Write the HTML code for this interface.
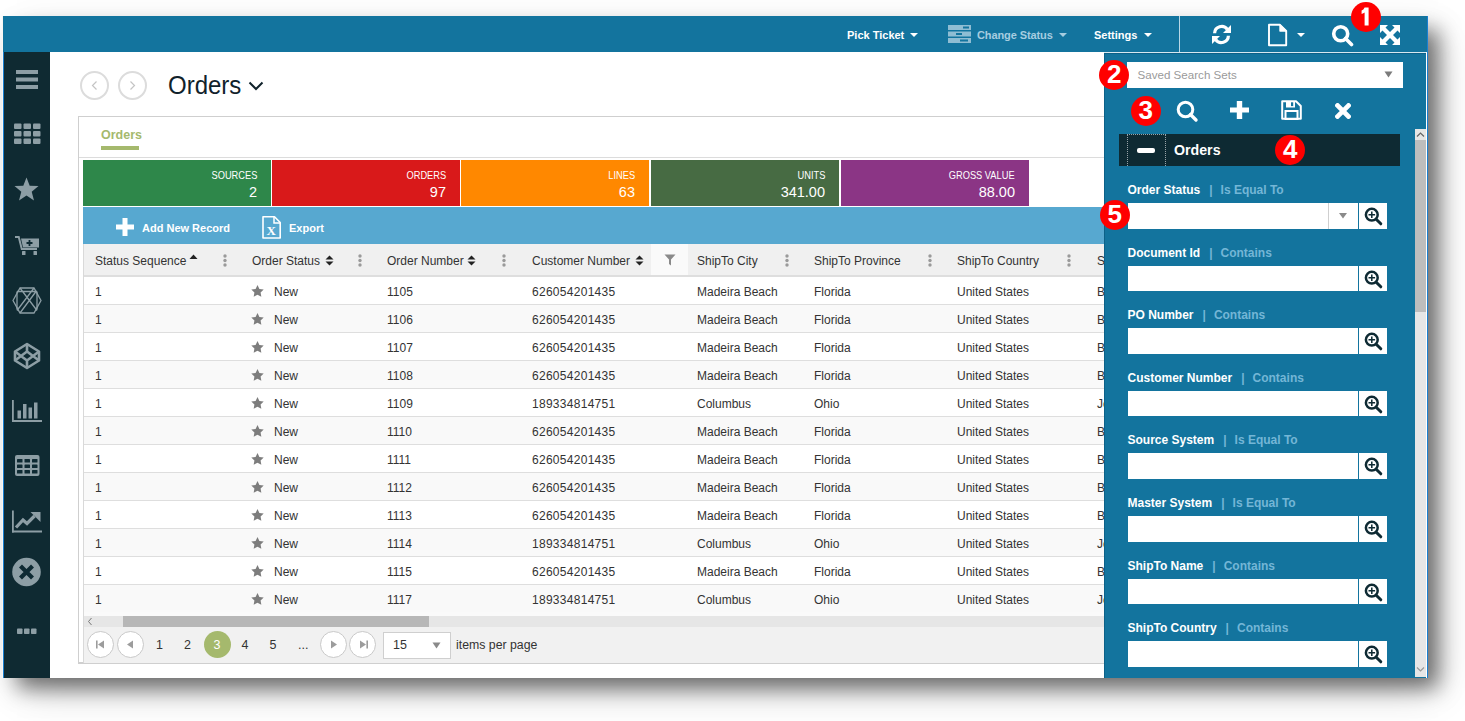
<!DOCTYPE html>
<html><head><meta charset="utf-8">
<style>
*{box-sizing:border-box;margin:0;padding:0}
html,body{width:1465px;height:721px;overflow:hidden;background:#fff;font-family:"Liberation Sans",sans-serif;color:#333}
.a{position:absolute}
#win{left:3px;top:16px;width:1425px;height:662px;background:#fff;box-shadow:12px 12px 20px -2px rgba(0,0,0,.52),14px 16px 40px -6px rgba(0,0,0,.2)}
#top{left:3px;top:16px;width:1425px;height:36px;background:#13749e}
#side{left:3px;top:52px;width:47px;height:626px;background:#0f2a32;border-left:1px solid #1a7fd0}
.tb{color:#fff;font-weight:bold;font-size:11px;top:28px;line-height:14px;white-space:nowrap}
.caret{width:0;height:0;border-left:4px solid transparent;border-right:4px solid transparent;border-top:4px solid #fff}
.ico{fill:#8d9ea5}
.tile{top:160px;width:188px;height:46px;color:#fff;text-align:right;padding-right:14px}
.tl{position:absolute;right:14px;top:8px;font-size:10.8px;line-height:14px;white-space:nowrap;transform:scaleX(.86);transform-origin:100% 50%}
.tv{position:absolute;right:14px;top:23px;font-size:14.5px;line-height:18px;white-space:nowrap}
.tbw{top:221px;color:#fff;font-weight:bold;font-size:11px;line-height:14px;white-space:nowrap}
.th{top:253px;font-size:12px;line-height:16px;color:#333;white-space:nowrap;transform:scaleY(1.07)}
.tr{left:83px;width:1030px;height:28px;border-bottom:1px solid #dedede}
.td{font-size:12px;line-height:16px;color:#333;white-space:nowrap;transform:translateY(1px) scaleY(1.07)}
.num{letter-spacing:0.28px}
.pc{top:631px;width:27px;height:27px;border-radius:50%;border:1px solid #c9c9c9;background:#fff}
.pn{top:637px;font-size:12.5px;line-height:16px;white-space:nowrap}
.fl{left:1127.5px;font-size:12px;font-weight:bold;line-height:16px;color:#fff;white-space:nowrap}
.fc{color:#74b6d6}
.fi{left:1127.5px;width:230px;height:25.5px;background:#fff}
.fb{left:1359px;width:28px;height:25.5px;background:#fff}
.fb svg{display:block}
.bd{width:30px;height:30px;border-radius:50%;background:#f00;color:#fff;font-weight:bold;font-size:26px;line-height:28.5px;text-align:center;letter-spacing:-0.5px}
</style></head><body>
<div id="win" class="a"></div>
<div class="a" style="left:2px;top:16px;width:1px;height:662px;background:#faf6f2"></div>
<div id="top" class="a"></div>
<div id="side" class="a"></div>
<!-- TOP BAR -->
<div class="a tb" style="left:847px">Pick Ticket</div>
<div class="a caret" style="left:910px;top:33px"></div>
<svg class="a" style="left:948px;top:25px" width="23" height="18" viewBox="0 0 23 18">
 <rect x="0" y="0" width="23" height="5" fill="#8fbdd3"/><rect x="0" y="6.5" width="23" height="5" fill="#8fbdd3"/><rect x="0" y="13" width="23" height="5" fill="#8fbdd3"/>
 <rect x="15" y="1.5" width="6" height="2" fill="#13749e"/><rect x="8" y="8" width="6" height="2" fill="#13749e"/><rect x="12" y="14.5" width="8" height="2" fill="#13749e"/>
</svg>
<div class="a tb" style="left:977px;color:#a6cde0;letter-spacing:-0.1px">Change Status</div>
<div class="a caret" style="left:1059px;top:33px;border-top-color:#a6cde0"></div>
<div class="a tb" style="left:1094px">Settings</div>
<div class="a caret" style="left:1144px;top:33px"></div>
<div class="a" style="left:1179px;top:16px;width:1px;height:36px;background:#b9d8e6"></div>
<!-- refresh -->
<svg class="a" style="left:1211px;top:24px" width="21" height="21" viewBox="0 0 21 21">
 <path d="M3.6 9.2 A7 7 0 0 1 16.3 5.4" fill="none" stroke="#fff" stroke-width="3.2"/>
 <path d="M20 1 L20 9 L12 9 Z" fill="#fff"/>
 <path d="M17.4 11.8 A7 7 0 0 1 4.7 15.6" fill="none" stroke="#fff" stroke-width="3.2"/>
 <path d="M1 20 L1 12 L9 12 Z" fill="#fff"/>
</svg>
<!-- file -->
<svg class="a" style="left:1267px;top:23px" width="21" height="24" viewBox="0 0 21 24">
 <path d="M2 1.8 H13 L19.2 8 V22.2 H2 Z" fill="none" stroke="#fff" stroke-width="1.9" stroke-linejoin="round"/>
 <path d="M13 2 V8 H19 Z" fill="#fff" stroke="#fff" stroke-width="1.4" stroke-linejoin="round"/>
</svg>
<div class="a caret" style="left:1297px;top:33px"></div>
<!-- search -->
<svg class="a" style="left:1331px;top:24px" width="23" height="23" viewBox="0 0 23 23">
 <circle cx="9.7" cy="9.7" r="7" fill="none" stroke="#fff" stroke-width="3.6"/>
 <path d="M14.5 14.5 L20.5 20.5" stroke="#fff" stroke-width="3.6" stroke-linecap="round"/>
</svg>
<!-- expand -->
<svg class="a" style="left:1379px;top:24px" width="22" height="22" viewBox="0 0 22 22">
 <path d="M1 1 H9 L6.5 3.5 L11 8 L15.5 3.5 L13 1 H21 V9 L18.5 6.5 L14 11 L18.5 15.5 L21 13 V21 H13 L15.5 18.5 L11 14 L6.5 18.5 L9 21 H1 V13 L3.5 15.5 L8 11 L3.5 6.5 L1 9 Z" fill="#fff"/>
</svg>
<div class="a" style="left:1104px;top:52px;width:324px;height:1px;background:#d8e8f0"></div>
<div class="a" style="left:1426px;top:52px;width:1px;height:626px;background:#fff"></div>
<div class="a" style="left:1427px;top:16px;width:1px;height:662px;background:#1a7fd0"></div>

<!-- SIDEBAR ICONS -->
<svg class="a" style="left:4px;top:52px" width="46" height="626" viewBox="0 0 46 626">
 <g fill="#8d9ea5" stroke="none">
  <!-- hamburger (page y 70..89) -->
  <rect x="12" y="18" width="22" height="4"/><rect x="12" y="25.5" width="22" height="4"/><rect x="12" y="33" width="22" height="4"/>
  <!-- grid y 123..144 -->
  <g transform="translate(10,71.5)">
   <rect x="0" y="0" width="7.5" height="5.5" rx="1"/><rect x="9.5" y="0" width="7.5" height="5.5" rx="1"/><rect x="19" y="0" width="7.5" height="5.5" rx="1"/>
   <rect x="0" y="7.5" width="7.5" height="5.5" rx="1"/><rect x="9.5" y="7.5" width="7.5" height="5.5" rx="1"/><rect x="19" y="7.5" width="7.5" height="5.5" rx="1"/>
   <rect x="0" y="15" width="7.5" height="5.5" rx="1"/><rect x="9.5" y="15" width="7.5" height="5.5" rx="1"/><rect x="19" y="15" width="7.5" height="5.5" rx="1"/>
  </g>
  <!-- star y 177.5..201 -->
  <path transform="translate(10.5,125.5)" d="M12 0 L15.2 8.2 L24 8.6 L17.2 14.2 L19.5 23 L12 18.1 L4.5 23 L6.8 14.2 L0 8.6 L8.8 8.2 Z"/>
  <!-- cart y 236..256 -->
  <g transform="translate(11,183.5)">
   <path d="M0 0.5 H4.5 L7.5 12.5 H22 V14.5 H6 L3 2.5 H0 Z"/>
   <path d="M6 3 H24 V12 H8 Z"/>
   <rect x="7" y="15.5" width="3.5" height="4" rx="0.5"/><rect x="18.5" y="15.5" width="3.5" height="4" rx="0.5"/>
  </g>
  <path transform="translate(11,183.5)" d="M14.5 4.5 V10.5 M11.5 7.5 H17.5" stroke="#0e2a33" stroke-width="1.8"/>
 </g>
 <g fill="none" stroke="#8d9ea5">
  <!-- hex1 y 287.5..313 -->
  <g transform="translate(23,248.5)" stroke-width="1.3">
   <path d="M-14 0 L-7 -12.5 L7 -12.5 L14 0 L7 12.5 L-7 12.5 Z"/>
   <path d="M-7 -12.5 L10 10 M7 -12.5 L-10 10 M-10 -9 L-10 9 M10 -9 L10 9 M-10 -9 L10 -9 M-7 12.5 L9 -9"/>
  </g>
  <!-- hex2 codepen y 343..369 -->
  <g transform="translate(23,304)" stroke-width="2.6" stroke-linejoin="round">
   <path d="M0 -12 L12 -4.5 L12 4.5 L0 12 L-12 4.5 L-12 -4.5 Z"/>
   <path d="M0 -12 V-4.5 M0 12 V4.5 M-12 -4.5 L0 4.5 L12 -4.5 M-12 4.5 L0 -4.5 L12 4.5"/>
  </g>
 </g>
 <g fill="#8d9ea5">
  <!-- bar chart y 400..422 -->
  <g transform="translate(8,348)">
   <rect x="0" y="0" width="1.8" height="22"/><rect x="0" y="20" width="30" height="2"/>
   <rect x="5.5" y="10.5" width="3.5" height="8"/><rect x="11" y="4" width="3.5" height="14.5"/><rect x="16.5" y="7.5" width="3.5" height="11"/><rect x="22" y="2.5" width="3.5" height="16"/>
  </g>
  <!-- table y 455..476 -->
  <g transform="translate(11,403)">
   <rect x="0" y="0" width="24.5" height="21" rx="2"/>
  </g>
  <g transform="translate(11,403)" fill="#0e2a33">
   <rect x="2" y="4" width="5.5" height="3.5" rx="0.6"/><rect x="9.5" y="4" width="5.5" height="3.5" rx="0.6"/><rect x="17" y="4" width="5.5" height="3.5" rx="0.6"/>
   <rect x="2" y="9.5" width="5.5" height="3.5" rx="0.6"/><rect x="9.5" y="9.5" width="5.5" height="3.5" rx="0.6"/><rect x="17" y="9.5" width="5.5" height="3.5" rx="0.6"/>
   <rect x="2" y="15" width="5.5" height="3.5" rx="0.6"/><rect x="9.5" y="15" width="5.5" height="3.5" rx="0.6"/><rect x="17" y="15" width="5.5" height="3.5" rx="0.6"/>
  </g>
  <!-- line chart y 510..533 -->
  <g transform="translate(8,458.5)">
   <rect x="0" y="0" width="1.8" height="22"/><rect x="0" y="20" width="30" height="2"/>
  </g>
  <path transform="translate(8,458.5)" d="M4 17 L11 9.5 L15 13 L22.5 5.5" fill="none" stroke="#8d9ea5" stroke-width="3.2" stroke-linejoin="miter"/>
  <path transform="translate(8,458.5)" d="M18.5 1.5 H28.5 V11.5 Z" fill="#8d9ea5"/>
  <!-- x circle y 558..586 -->
  <circle cx="22.5" cy="520" r="14.3"/>
  <path d="M16.5 514 L28.5 526 M28.5 514 L16.5 526" stroke="#0e2a33" stroke-width="4.2"/>
  <!-- dots y 629..634 -->
  <rect x="13" y="576.5" width="5.5" height="5.5" rx="0.8"/><rect x="20" y="576.5" width="5.5" height="5.5" rx="0.8"/><rect x="27" y="576.5" width="5.5" height="5.5" rx="0.8"/>
 </g>
</svg>

<!--MAIN-->
<!-- MAIN CONTENT -->
<div class="a" style="left:80px;top:71px;width:29px;height:29px;border:2px solid #dcdcdc;border-radius:50%"></div>
<div class="a" style="left:118px;top:71px;width:29px;height:29px;border:2px solid #dcdcdc;border-radius:50%"></div>
<svg class="a" style="left:80px;top:71px" width="67" height="29" viewBox="0 0 67 29">
 <path d="M16.5 10.5 L12.5 14.5 L16.5 18.5" fill="none" stroke="#c4c4c4" stroke-width="1.2"/>
 <path d="M50.5 10.5 L54.5 14.5 L50.5 18.5" fill="none" stroke="#c4c4c4" stroke-width="1.2"/>
</svg>
<div class="a" style="left:168px;top:72px;font-size:24px;line-height:30px;color:#10222b;transform:scaleY(1.08);transform-origin:0 100%">Orders</div>
<svg class="a" style="left:248px;top:80px" width="16" height="12" viewBox="0 0 16 12"><path d="M1.5 2.5 L8 9 L14.5 2.5" fill="none" stroke="#10222b" stroke-width="2"/></svg>
<div class="a" style="left:78px;top:116px;width:1100px;height:548px;border:1px solid #cfcfcf;border-bottom:2px solid #cfcfcf"></div>
<div class="a" style="left:101px;top:127px;font-size:12.5px;font-weight:bold;line-height:16px;color:#a5b96d">Orders</div>
<div class="a" style="left:101px;top:146px;width:38px;height:3.5px;background:#a5b96d"></div>
<div class="a" style="left:79px;top:157px;width:1100px;height:1px;background:#dcdcdc"></div>

<div class="a tile" style="left:83px;background:#2e874a"><div class="tl">SOURCES</div><div class="tv">2</div></div>
<div class="a tile" style="left:272px;background:#d9191a"><div class="tl">ORDERS</div><div class="tv">97</div></div>
<div class="a tile" style="left:461px;background:#ff8800"><div class="tl">LINES</div><div class="tv">63</div></div>
<div class="a tile" style="left:651px;background:#476b43"><div class="tl">UNITS</div><div class="tv">341.00</div></div>
<div class="a tile" style="left:841px;background:#8b3585"><div class="tl">GROSS VALUE</div><div class="tv">88.00</div></div>

<div class="a" style="left:83px;top:207px;width:1030px;height:37px;background:#57a8d0"></div>
<svg class="a" style="left:116px;top:218px" width="18" height="18" viewBox="0 0 18 18"><path d="M6.5 0 H11.5 V6.5 H18 V11.5 H11.5 V18 H6.5 V11.5 H0 V6.5 H6.5 Z" fill="#fff"/></svg>
<div class="a tbw" style="left:142px">Add New Record</div>
<svg class="a" style="left:260px;top:215px" width="23" height="25" viewBox="0 0 23 25">
 <path d="M3 1.8 H14.5 L20.2 7.5 V23 H3 Z" fill="none" stroke="#fff" stroke-width="1.6" stroke-linejoin="round"/>
 <path d="M14 2 V8 H20" fill="none" stroke="#fff" stroke-width="1.5"/>
 <text x="11.3" y="19.8" font-family="Liberation Serif" font-weight="bold" font-size="13" fill="#fff" text-anchor="middle">X</text>
</svg>
<div class="a tbw" style="left:289px">Export</div>
<div class="a" style="left:83px;top:244px;width:1030px;height:33px;background:#f0f0f0;border-bottom:2px solid #dedede"></div>
<div class="a" style="left:651px;top:244px;width:37px;height:31px;background:#fafafa"></div>

<div class="a th" style="left:95px">Status Sequence</div>
<svg class="a" style="left:223px;top:254px" width="4" height="13" viewBox="0 0 4 13"><circle cx="2" cy="2" r="1.7" fill="#9a9a9a"/><circle cx="2" cy="6.5" r="1.7" fill="#9a9a9a"/><circle cx="2" cy="11" r="1.7" fill="#9a9a9a"/></svg>
<div class="a th" style="left:252px">Order Status</div>
<svg class="a" style="left:358px;top:254px" width="4" height="13" viewBox="0 0 4 13"><circle cx="2" cy="2" r="1.7" fill="#9a9a9a"/><circle cx="2" cy="6.5" r="1.7" fill="#9a9a9a"/><circle cx="2" cy="11" r="1.7" fill="#9a9a9a"/></svg>
<div class="a th" style="left:387px">Order Number</div>
<svg class="a" style="left:502px;top:254px" width="4" height="13" viewBox="0 0 4 13"><circle cx="2" cy="2" r="1.7" fill="#9a9a9a"/><circle cx="2" cy="6.5" r="1.7" fill="#9a9a9a"/><circle cx="2" cy="11" r="1.7" fill="#9a9a9a"/></svg>
<div class="a th" style="left:532px">Customer Number</div>
<div class="a th" style="left:697px">ShipTo City</div>
<svg class="a" style="left:785px;top:254px" width="4" height="13" viewBox="0 0 4 13"><circle cx="2" cy="2" r="1.7" fill="#9a9a9a"/><circle cx="2" cy="6.5" r="1.7" fill="#9a9a9a"/><circle cx="2" cy="11" r="1.7" fill="#9a9a9a"/></svg>
<div class="a th" style="left:814px">ShipTo Province</div>
<svg class="a" style="left:928px;top:254px" width="4" height="13" viewBox="0 0 4 13"><circle cx="2" cy="2" r="1.7" fill="#9a9a9a"/><circle cx="2" cy="6.5" r="1.7" fill="#9a9a9a"/><circle cx="2" cy="11" r="1.7" fill="#9a9a9a"/></svg>
<div class="a th" style="left:957px">ShipTo Country</div>
<svg class="a" style="left:1067px;top:254px" width="4" height="13" viewBox="0 0 4 13"><circle cx="2" cy="2" r="1.7" fill="#9a9a9a"/><circle cx="2" cy="6.5" r="1.7" fill="#9a9a9a"/><circle cx="2" cy="11" r="1.7" fill="#9a9a9a"/></svg>
<div class="a th" style="left:1097px">S</div>
<svg class="a" style="left:189px;top:254px" width="9" height="6" viewBox="0 0 9 6"><path d="M0.5 5 L4.5 0.5 L8.5 5 Z" fill="#222"/></svg>
<svg class="a" style="left:324.5px;top:254.5px" width="9" height="11" viewBox="0 0 9 11"><path d="M0.5 4.5 L4.5 0.5 L8.5 4.5 Z M0.5 6.5 L4.5 10.5 L8.5 6.5 Z" fill="#222"/></svg>
<svg class="a" style="left:467px;top:254.5px" width="9" height="11" viewBox="0 0 9 11"><path d="M0.5 4.5 L4.5 0.5 L8.5 4.5 Z M0.5 6.5 L4.5 10.5 L8.5 6.5 Z" fill="#222"/></svg>
<svg class="a" style="left:634.5px;top:254.5px" width="9" height="11" viewBox="0 0 9 11"><path d="M0.5 4.5 L4.5 0.5 L8.5 4.5 Z M0.5 6.5 L4.5 10.5 L8.5 6.5 Z" fill="#222"/></svg>
<svg class="a" style="left:664px;top:254px" width="12" height="12" viewBox="0 0 12 12"><path d="M0.5 0.5 H11.5 L7 5.5 V11.5 L5 10 V5.5 Z" fill="#8a8a8a"/></svg>
<div class="a tr" style="top:277px;background:#fff"></div>
<div class="a td" style="left:95px;top:283px">1</div>
<svg class="a" style="left:251px;top:285px" width="13" height="12" viewBox="0 0 24 23"><path d="M12.00 0.00 L15.64 7.48 L23.89 8.64 L17.90 14.42 L19.35 22.61 L12.00 18.70 L4.65 22.61 L6.10 14.42 L0.11 8.64 L8.36 7.48 Z" fill="#7d7d7d"/></svg>
<div class="a td" style="left:274px;top:283px">New</div>
<div class="a td" style="left:387px;top:283px">1105</div>
<div class="a td num" style="left:532px;top:283px">626054201435</div>
<div class="a td" style="left:697px;top:283px">Madeira Beach</div>
<div class="a td" style="left:814px;top:283px">Florida</div>
<div class="a td" style="left:957px;top:283px">United States</div>
<div class="a td" style="left:1097px;top:283px">B</div>
<div class="a tr" style="top:305px;background:#f9f9f9"></div>
<div class="a td" style="left:95px;top:311px">1</div>
<svg class="a" style="left:251px;top:313px" width="13" height="12" viewBox="0 0 24 23"><path d="M12.00 0.00 L15.64 7.48 L23.89 8.64 L17.90 14.42 L19.35 22.61 L12.00 18.70 L4.65 22.61 L6.10 14.42 L0.11 8.64 L8.36 7.48 Z" fill="#7d7d7d"/></svg>
<div class="a td" style="left:274px;top:311px">New</div>
<div class="a td" style="left:387px;top:311px">1106</div>
<div class="a td num" style="left:532px;top:311px">626054201435</div>
<div class="a td" style="left:697px;top:311px">Madeira Beach</div>
<div class="a td" style="left:814px;top:311px">Florida</div>
<div class="a td" style="left:957px;top:311px">United States</div>
<div class="a td" style="left:1097px;top:311px">B</div>
<div class="a tr" style="top:333px;background:#fff"></div>
<div class="a td" style="left:95px;top:339px">1</div>
<svg class="a" style="left:251px;top:341px" width="13" height="12" viewBox="0 0 24 23"><path d="M12.00 0.00 L15.64 7.48 L23.89 8.64 L17.90 14.42 L19.35 22.61 L12.00 18.70 L4.65 22.61 L6.10 14.42 L0.11 8.64 L8.36 7.48 Z" fill="#7d7d7d"/></svg>
<div class="a td" style="left:274px;top:339px">New</div>
<div class="a td" style="left:387px;top:339px">1107</div>
<div class="a td num" style="left:532px;top:339px">626054201435</div>
<div class="a td" style="left:697px;top:339px">Madeira Beach</div>
<div class="a td" style="left:814px;top:339px">Florida</div>
<div class="a td" style="left:957px;top:339px">United States</div>
<div class="a td" style="left:1097px;top:339px">B</div>
<div class="a tr" style="top:361px;background:#f9f9f9"></div>
<div class="a td" style="left:95px;top:367px">1</div>
<svg class="a" style="left:251px;top:369px" width="13" height="12" viewBox="0 0 24 23"><path d="M12.00 0.00 L15.64 7.48 L23.89 8.64 L17.90 14.42 L19.35 22.61 L12.00 18.70 L4.65 22.61 L6.10 14.42 L0.11 8.64 L8.36 7.48 Z" fill="#7d7d7d"/></svg>
<div class="a td" style="left:274px;top:367px">New</div>
<div class="a td" style="left:387px;top:367px">1108</div>
<div class="a td num" style="left:532px;top:367px">626054201435</div>
<div class="a td" style="left:697px;top:367px">Madeira Beach</div>
<div class="a td" style="left:814px;top:367px">Florida</div>
<div class="a td" style="left:957px;top:367px">United States</div>
<div class="a td" style="left:1097px;top:367px">B</div>
<div class="a tr" style="top:389px;background:#fff"></div>
<div class="a td" style="left:95px;top:395px">1</div>
<svg class="a" style="left:251px;top:397px" width="13" height="12" viewBox="0 0 24 23"><path d="M12.00 0.00 L15.64 7.48 L23.89 8.64 L17.90 14.42 L19.35 22.61 L12.00 18.70 L4.65 22.61 L6.10 14.42 L0.11 8.64 L8.36 7.48 Z" fill="#7d7d7d"/></svg>
<div class="a td" style="left:274px;top:395px">New</div>
<div class="a td" style="left:387px;top:395px">1109</div>
<div class="a td num" style="left:532px;top:395px">189334814751</div>
<div class="a td" style="left:697px;top:395px">Columbus</div>
<div class="a td" style="left:814px;top:395px">Ohio</div>
<div class="a td" style="left:957px;top:395px">United States</div>
<div class="a td" style="left:1097px;top:395px">Jo</div>
<div class="a tr" style="top:417px;background:#f9f9f9"></div>
<div class="a td" style="left:95px;top:423px">1</div>
<svg class="a" style="left:251px;top:425px" width="13" height="12" viewBox="0 0 24 23"><path d="M12.00 0.00 L15.64 7.48 L23.89 8.64 L17.90 14.42 L19.35 22.61 L12.00 18.70 L4.65 22.61 L6.10 14.42 L0.11 8.64 L8.36 7.48 Z" fill="#7d7d7d"/></svg>
<div class="a td" style="left:274px;top:423px">New</div>
<div class="a td" style="left:387px;top:423px">1110</div>
<div class="a td num" style="left:532px;top:423px">626054201435</div>
<div class="a td" style="left:697px;top:423px">Madeira Beach</div>
<div class="a td" style="left:814px;top:423px">Florida</div>
<div class="a td" style="left:957px;top:423px">United States</div>
<div class="a td" style="left:1097px;top:423px">B</div>
<div class="a tr" style="top:445px;background:#fff"></div>
<div class="a td" style="left:95px;top:451px">1</div>
<svg class="a" style="left:251px;top:453px" width="13" height="12" viewBox="0 0 24 23"><path d="M12.00 0.00 L15.64 7.48 L23.89 8.64 L17.90 14.42 L19.35 22.61 L12.00 18.70 L4.65 22.61 L6.10 14.42 L0.11 8.64 L8.36 7.48 Z" fill="#7d7d7d"/></svg>
<div class="a td" style="left:274px;top:451px">New</div>
<div class="a td" style="left:387px;top:451px">1111</div>
<div class="a td num" style="left:532px;top:451px">626054201435</div>
<div class="a td" style="left:697px;top:451px">Madeira Beach</div>
<div class="a td" style="left:814px;top:451px">Florida</div>
<div class="a td" style="left:957px;top:451px">United States</div>
<div class="a td" style="left:1097px;top:451px">B</div>
<div class="a tr" style="top:473px;background:#f9f9f9"></div>
<div class="a td" style="left:95px;top:479px">1</div>
<svg class="a" style="left:251px;top:481px" width="13" height="12" viewBox="0 0 24 23"><path d="M12.00 0.00 L15.64 7.48 L23.89 8.64 L17.90 14.42 L19.35 22.61 L12.00 18.70 L4.65 22.61 L6.10 14.42 L0.11 8.64 L8.36 7.48 Z" fill="#7d7d7d"/></svg>
<div class="a td" style="left:274px;top:479px">New</div>
<div class="a td" style="left:387px;top:479px">1112</div>
<div class="a td num" style="left:532px;top:479px">626054201435</div>
<div class="a td" style="left:697px;top:479px">Madeira Beach</div>
<div class="a td" style="left:814px;top:479px">Florida</div>
<div class="a td" style="left:957px;top:479px">United States</div>
<div class="a td" style="left:1097px;top:479px">B</div>
<div class="a tr" style="top:501px;background:#fff"></div>
<div class="a td" style="left:95px;top:507px">1</div>
<svg class="a" style="left:251px;top:509px" width="13" height="12" viewBox="0 0 24 23"><path d="M12.00 0.00 L15.64 7.48 L23.89 8.64 L17.90 14.42 L19.35 22.61 L12.00 18.70 L4.65 22.61 L6.10 14.42 L0.11 8.64 L8.36 7.48 Z" fill="#7d7d7d"/></svg>
<div class="a td" style="left:274px;top:507px">New</div>
<div class="a td" style="left:387px;top:507px">1113</div>
<div class="a td num" style="left:532px;top:507px">626054201435</div>
<div class="a td" style="left:697px;top:507px">Madeira Beach</div>
<div class="a td" style="left:814px;top:507px">Florida</div>
<div class="a td" style="left:957px;top:507px">United States</div>
<div class="a td" style="left:1097px;top:507px">B</div>
<div class="a tr" style="top:529px;background:#f9f9f9"></div>
<div class="a td" style="left:95px;top:535px">1</div>
<svg class="a" style="left:251px;top:537px" width="13" height="12" viewBox="0 0 24 23"><path d="M12.00 0.00 L15.64 7.48 L23.89 8.64 L17.90 14.42 L19.35 22.61 L12.00 18.70 L4.65 22.61 L6.10 14.42 L0.11 8.64 L8.36 7.48 Z" fill="#7d7d7d"/></svg>
<div class="a td" style="left:274px;top:535px">New</div>
<div class="a td" style="left:387px;top:535px">1114</div>
<div class="a td num" style="left:532px;top:535px">189334814751</div>
<div class="a td" style="left:697px;top:535px">Columbus</div>
<div class="a td" style="left:814px;top:535px">Ohio</div>
<div class="a td" style="left:957px;top:535px">United States</div>
<div class="a td" style="left:1097px;top:535px">Jo</div>
<div class="a tr" style="top:557px;background:#fff"></div>
<div class="a td" style="left:95px;top:563px">1</div>
<svg class="a" style="left:251px;top:565px" width="13" height="12" viewBox="0 0 24 23"><path d="M12.00 0.00 L15.64 7.48 L23.89 8.64 L17.90 14.42 L19.35 22.61 L12.00 18.70 L4.65 22.61 L6.10 14.42 L0.11 8.64 L8.36 7.48 Z" fill="#7d7d7d"/></svg>
<div class="a td" style="left:274px;top:563px">New</div>
<div class="a td" style="left:387px;top:563px">1115</div>
<div class="a td num" style="left:532px;top:563px">626054201435</div>
<div class="a td" style="left:697px;top:563px">Madeira Beach</div>
<div class="a td" style="left:814px;top:563px">Florida</div>
<div class="a td" style="left:957px;top:563px">United States</div>
<div class="a td" style="left:1097px;top:563px">B</div>
<div class="a tr" style="top:585px;background:#f9f9f9"></div>
<div class="a td" style="left:95px;top:591px">1</div>
<svg class="a" style="left:251px;top:593px" width="13" height="12" viewBox="0 0 24 23"><path d="M12.00 0.00 L15.64 7.48 L23.89 8.64 L17.90 14.42 L19.35 22.61 L12.00 18.70 L4.65 22.61 L6.10 14.42 L0.11 8.64 L8.36 7.48 Z" fill="#7d7d7d"/></svg>
<div class="a td" style="left:274px;top:591px">New</div>
<div class="a td" style="left:387px;top:591px">1117</div>
<div class="a td num" style="left:532px;top:591px">189334814751</div>
<div class="a td" style="left:697px;top:591px">Columbus</div>
<div class="a td" style="left:814px;top:591px">Ohio</div>
<div class="a td" style="left:957px;top:591px">United States</div>
<div class="a td" style="left:1097px;top:591px">Jo</div>

<div class="a" style="left:83px;top:244px;width:1px;height:419px;background:#d9d9d9;z-index:2"></div>
<div class="a" style="left:83px;top:612px;width:1030px;height:4px;background:#fafafa"></div>
<div class="a" style="left:83px;top:616px;width:1030px;height:11px;background:#e6e6e6"></div>
<div class="a" style="left:123px;top:616px;width:306px;height:11px;background:#b7b7b7"></div>
<svg class="a" style="left:86px;top:617px" width="8" height="9" viewBox="0 0 8 9"><path d="M5.5 1 L2.5 4.5 L5.5 8" fill="none" stroke="#777" stroke-width="1"/></svg>
<div class="a" style="left:83px;top:627px;width:1030px;height:36px;background:#f1f1f1"></div>

<div class="a pc" style="left:86.8px"></div>
<div class="a pc" style="left:116.80000000000001px"></div>
<div class="a pc" style="left:319.5px"></div>
<div class="a pc" style="left:349.3px"></div>
<svg class="a" style="left:86px;top:631px" width="292" height="28" viewBox="0 0 292 28">
 <g fill="#9c9c9c">
  <rect x="10" y="9.5" width="1.6" height="8"/><path d="M18 9.5 L12 13.5 L18 17.5 Z"/>
  <path d="M47 9.5 L41 13.5 L47 17.5 Z"/>
  <path d="M245 9.5 L251 13.5 L245 17.5 Z"/>
  <path d="M274 9.5 L280 13.5 L274 17.5 Z"/><rect x="280.4" y="9.5" width="1.6" height="8"/>
 </g>
</svg>
<div class="a" style="left:203.5px;top:631px;width:27px;height:27px;border-radius:50%;background:#a5b96d"></div>

<div class="a pn" style="left:156px;color:#333">1</div>
<div class="a pn" style="left:184px;color:#333">2</div>
<div class="a pn" style="left:213.5px;color:#fff">3</div>
<div class="a pn" style="left:241.5px;color:#333">4</div>
<div class="a pn" style="left:269.5px;color:#333">5</div>
<div class="a pn" style="left:298px;color:#333">...</div>
<div class="a" style="left:383px;top:632px;width:68px;height:27px;background:#fff;border:1px solid #cfcfcf"></div>
<div class="a pn" style="left:393px">15</div>
<svg class="a" style="left:432px;top:642px" width="9" height="7" viewBox="0 0 9 7"><path d="M0.5 0.5 H8.5 L4.5 6.5 Z" fill="#8a8a8a"/></svg>
<div class="a pn" style="left:456px;font-size:12.3px">items per page</div>

<!--PANEL-->
<!-- FILTER PANEL -->
<div class="a" style="left:1104px;top:53px;width:322px;height:625px;background:#13749e;border-left:1px solid #0c6188;border-top:1px solid #0c6188"></div>
<div class="a" style="left:1127px;top:62px;width:276px;height:25.5px;background:#fff"></div>
<div class="a" style="left:1137.5px;top:67px;font-size:11.6px;line-height:16px;color:#9a9a9a;white-space:nowrap">Saved Search Sets</div>
<svg class="a" style="left:1384px;top:71px" width="9" height="7" viewBox="0 0 9 7"><path d="M0.5 0.5 H8.5 L4.5 6.5 Z" fill="#7b7b7b"/></svg>
<!-- icon row -->
<svg class="a" style="left:1175px;top:99px" width="24" height="24" viewBox="0 0 24 24">
 <circle cx="10.5" cy="10.5" r="7.3" fill="none" stroke="#fff" stroke-width="3"/>
 <path d="M15.5 15.5 L21 21" stroke="#fff" stroke-width="3.4" stroke-linecap="round"/>
</svg>
<svg class="a" style="left:1229.5px;top:100.5px" width="19" height="18" viewBox="0 0 19 18"><path d="M6.8 0 H12.2 V6.4 H19 V11.6 H12.2 V18 H6.8 V11.6 H0 V6.4 H6.8 Z" fill="#fff"/></svg>
<svg class="a" style="left:1281px;top:100px" width="21" height="20" viewBox="0 0 21 20">
 <path d="M1.2 1.2 H15 L19.8 6 V18.8 H1.2 Z" fill="none" stroke="#fff" stroke-width="2" stroke-linejoin="round"/>
 <rect x="5" y="1" width="9" height="6.5" fill="#fff"/><rect x="10" y="2.3" width="2.2" height="3.8" fill="#13749e"/>
 <rect x="4.5" y="11" width="12" height="8" fill="none" stroke="#fff" stroke-width="2"/>
</svg>
<svg class="a" style="left:1335px;top:103px" width="16" height="16" viewBox="0 0 16 16"><path d="M2.5 2.5 L13.5 13.5 M13.5 2.5 L2.5 13.5" stroke="#fff" stroke-width="4.6" stroke-linecap="square"/></svg>
<!-- orders header -->
<div class="a" style="left:1119px;top:134px;width:281px;height:32px;background:#0e2a33"></div>
<div class="a" style="left:1127px;top:134px;width:39px;height:32px;border:1px dotted #9aa4a8;border-bottom:none"></div>
<div class="a" style="left:1137px;top:147.5px;width:18px;height:5px;border-radius:2px;background:#fff"></div>
<div class="a" style="left:1174px;top:141px;font-size:14.2px;font-weight:bold;line-height:18px;color:#fff;white-space:nowrap">Orders</div>
<!-- scrollbar -->
<div class="a" style="left:1415px;top:129px;width:11px;height:548px;background:#e6e6e6"></div>
<div class="a" style="left:1415px;top:140px;width:11px;height:172px;background:#bdbdbd"></div>
<svg class="a" style="left:1415px;top:130px" width="11" height="10" viewBox="0 0 11 10"><path d="M2 6.5 L5.5 3 L9 6.5" fill="none" stroke="#666" stroke-width="1.2"/></svg>
<svg class="a" style="left:1415px;top:664px" width="11" height="10" viewBox="0 0 11 10"><path d="M2 3.5 L5.5 7 L9 3.5" fill="none" stroke="#999" stroke-width="1.2"/></svg>

<div class="a fl" style="top:182.0px">Order Status<span class="fc" style="margin-left:9px">|</span><span class="fc" style="margin-left:8px">Is Equal To</span></div>
<div class="a fi" style="top:203px"></div>
<div class="a fb" style="top:203px"><svg width="28" height="25.5" viewBox="0 0 28 25.5"><circle cx="12.8" cy="11.7" r="5.9" fill="none" stroke="#0e2a33" stroke-width="2.5"/><path d="M17.2 16.2 L21.8 20.8" stroke="#0e2a33" stroke-width="3" stroke-linecap="round"/><path d="M12.8 8.4 V15 M9.5 11.7 H16.1" stroke="#0e2a33" stroke-width="1.5"/></svg></div>
<div class="a fl" style="top:244.6px">Document Id<span class="fc" style="margin-left:9px">|</span><span class="fc" style="margin-left:8px">Contains</span></div>
<div class="a fi" style="top:265.6px"></div>
<div class="a fb" style="top:265.6px"><svg width="28" height="25.5" viewBox="0 0 28 25.5"><circle cx="12.8" cy="11.7" r="5.9" fill="none" stroke="#0e2a33" stroke-width="2.5"/><path d="M17.2 16.2 L21.8 20.8" stroke="#0e2a33" stroke-width="3" stroke-linecap="round"/><path d="M12.8 8.4 V15 M9.5 11.7 H16.1" stroke="#0e2a33" stroke-width="1.5"/></svg></div>
<div class="a fl" style="top:307.2px">PO Number<span class="fc" style="margin-left:9px">|</span><span class="fc" style="margin-left:8px">Contains</span></div>
<div class="a fi" style="top:328.2px"></div>
<div class="a fb" style="top:328.2px"><svg width="28" height="25.5" viewBox="0 0 28 25.5"><circle cx="12.8" cy="11.7" r="5.9" fill="none" stroke="#0e2a33" stroke-width="2.5"/><path d="M17.2 16.2 L21.8 20.8" stroke="#0e2a33" stroke-width="3" stroke-linecap="round"/><path d="M12.8 8.4 V15 M9.5 11.7 H16.1" stroke="#0e2a33" stroke-width="1.5"/></svg></div>
<div class="a fl" style="top:369.8px">Customer Number<span class="fc" style="margin-left:9px">|</span><span class="fc" style="margin-left:8px">Contains</span></div>
<div class="a fi" style="top:390.8px"></div>
<div class="a fb" style="top:390.8px"><svg width="28" height="25.5" viewBox="0 0 28 25.5"><circle cx="12.8" cy="11.7" r="5.9" fill="none" stroke="#0e2a33" stroke-width="2.5"/><path d="M17.2 16.2 L21.8 20.8" stroke="#0e2a33" stroke-width="3" stroke-linecap="round"/><path d="M12.8 8.4 V15 M9.5 11.7 H16.1" stroke="#0e2a33" stroke-width="1.5"/></svg></div>
<div class="a fl" style="top:432.4px">Source System<span class="fc" style="margin-left:9px">|</span><span class="fc" style="margin-left:8px">Is Equal To</span></div>
<div class="a fi" style="top:453.4px"></div>
<div class="a fb" style="top:453.4px"><svg width="28" height="25.5" viewBox="0 0 28 25.5"><circle cx="12.8" cy="11.7" r="5.9" fill="none" stroke="#0e2a33" stroke-width="2.5"/><path d="M17.2 16.2 L21.8 20.8" stroke="#0e2a33" stroke-width="3" stroke-linecap="round"/><path d="M12.8 8.4 V15 M9.5 11.7 H16.1" stroke="#0e2a33" stroke-width="1.5"/></svg></div>
<div class="a fl" style="top:495.0px">Master System<span class="fc" style="margin-left:9px">|</span><span class="fc" style="margin-left:8px">Is Equal To</span></div>
<div class="a fi" style="top:516px"></div>
<div class="a fb" style="top:516px"><svg width="28" height="25.5" viewBox="0 0 28 25.5"><circle cx="12.8" cy="11.7" r="5.9" fill="none" stroke="#0e2a33" stroke-width="2.5"/><path d="M17.2 16.2 L21.8 20.8" stroke="#0e2a33" stroke-width="3" stroke-linecap="round"/><path d="M12.8 8.4 V15 M9.5 11.7 H16.1" stroke="#0e2a33" stroke-width="1.5"/></svg></div>
<div class="a fl" style="top:557.6px">ShipTo Name<span class="fc" style="margin-left:9px">|</span><span class="fc" style="margin-left:8px">Contains</span></div>
<div class="a fi" style="top:578.6px"></div>
<div class="a fb" style="top:578.6px"><svg width="28" height="25.5" viewBox="0 0 28 25.5"><circle cx="12.8" cy="11.7" r="5.9" fill="none" stroke="#0e2a33" stroke-width="2.5"/><path d="M17.2 16.2 L21.8 20.8" stroke="#0e2a33" stroke-width="3" stroke-linecap="round"/><path d="M12.8 8.4 V15 M9.5 11.7 H16.1" stroke="#0e2a33" stroke-width="1.5"/></svg></div>
<div class="a fl" style="top:620.2px">ShipTo Country<span class="fc" style="margin-left:9px">|</span><span class="fc" style="margin-left:8px">Contains</span></div>
<div class="a fi" style="top:641.2px"></div>
<div class="a fb" style="top:641.2px"><svg width="28" height="25.5" viewBox="0 0 28 25.5"><circle cx="12.8" cy="11.7" r="5.9" fill="none" stroke="#0e2a33" stroke-width="2.5"/><path d="M17.2 16.2 L21.8 20.8" stroke="#0e2a33" stroke-width="3" stroke-linecap="round"/><path d="M12.8 8.4 V15 M9.5 11.7 H16.1" stroke="#0e2a33" stroke-width="1.5"/></svg></div>
<div class="a" style="left:1328px;top:203px;width:1px;height:25.5px;background:#cfcfcf"></div>
<svg class="a" style="left:1339px;top:213px" width="8" height="6" viewBox="0 0 8 6"><path d="M0 0 H8 L4 5.5 Z" fill="#8a8a8a"/></svg>
<div class="a bd" style="left:1351px;top:1.6px"><svg width="30" height="30" viewBox="0 0 30 30" style="display:block"><path d="M13.6 5.5 H17.6 V23.5 H13.6 V10.6 Q12.6 11.6 10.6 12 V8.6 Q12.6 7.8 13.6 5.5 Z" fill="#fff"/></svg></div>
<div class="a bd" style="left:1099px;top:59.5px">2</div>
<div class="a bd" style="left:1130.5px;top:95.6px">3</div>
<div class="a bd" style="left:1275px;top:135px">4</div>
<div class="a bd" style="left:1099.5px;top:200.3px">5</div>
</body></html>
